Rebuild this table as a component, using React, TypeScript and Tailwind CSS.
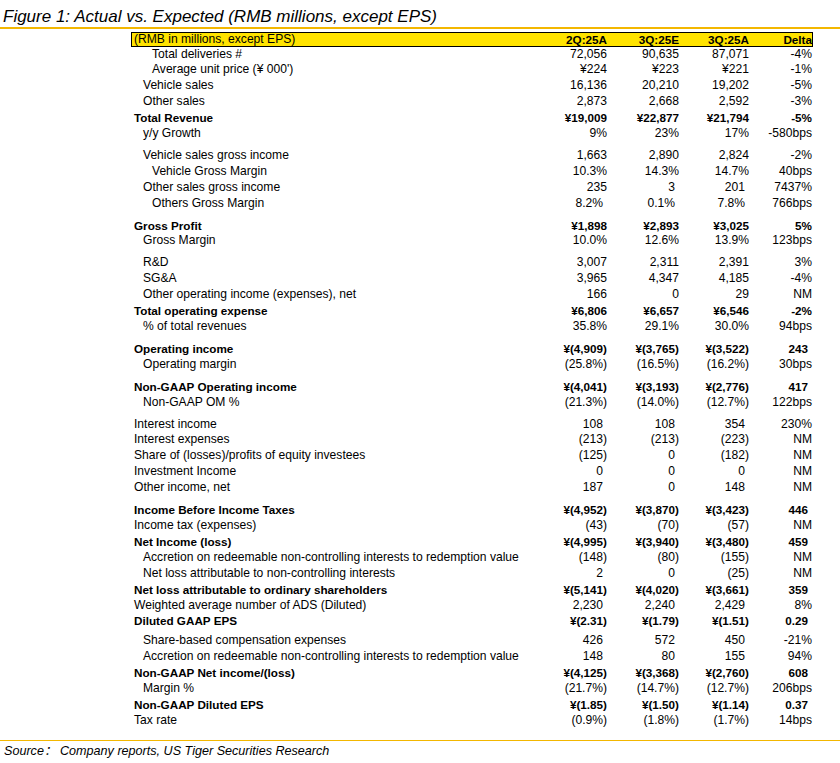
type Row = [string, number, boolean, string, string, string, string];

// "~" at the end of a value = cell is padded in from the right edge
const rows: (Row | "gap" | "gapSm")[] = [
  ["Total deliveries #", 2, false, "72,056", "90,635", "87,071", "-4%"],
  ["Average unit price (¥ 000')", 2, false, "¥224", "¥223", "¥221", "-1%"],
  ["Vehicle sales", 1, false, "16,136", "20,210", "19,202", "-5%"],
  ["Other sales", 1, false, "2,873", "2,668", "2,592", "-3%"],
  ["Total Revenue", 0, true, "¥19,009", "¥22,877", "¥21,794", "-5%"],
  ["y/y Growth", 1, false, "9%", "23%", "17%", "-580bps"],
  "gap",
  ["Vehicle sales gross income", 1, false, "1,663", "2,890", "2,824", "-2%"],
  ["Vehicle Gross Margin", 2, false, "10.3%", "14.3%", "14.7%", "40bps"],
  ["Other sales gross income", 1, false, "235", "3~", "201~", "7437%"],
  ["Others Gross Margin", 2, false, "8.2%~", "0.1%~", "7.8%~", "766bps"],
  "gap",
  ["Gross Profit", 0, true, "¥1,898", "¥2,893", "¥3,025", "5%"],
  ["Gross Margin", 1, false, "10.0%", "12.6%", "13.9%", "123bps"],
  "gap",
  ["R&D", 1, false, "3,007", "2,311", "2,391", "3%"],
  ["SG&A", 1, false, "3,965", "4,347", "4,185", "-4%"],
  ["Other operating income (expenses), net", 1, false, "166", "0", "29", "NM"],
  ["Total operating expense", 0, true, "¥6,806", "¥6,657", "¥6,546", "-2%"],
  ["% of total revenues", 1, false, "35.8%", "29.1%", "30.0%", "94bps"],
  "gap",
  ["Operating income", 0, true, "¥(4,909)", "¥(3,765)", "¥(3,522)", "243~"],
  ["Operating margin", 1, false, "(25.8%)", "(16.5%)", "(16.2%)", "30bps"],
  "gap",
  ["Non-GAAP Operating income", 0, true, "¥(4,041)", "¥(3,193)", "¥(2,776)", "417~"],
  ["Non-GAAP OM %", 1, false, "(21.3%)", "(14.0%)", "(12.7%)", "122bps"],
  "gap",
  ["Interest income", 0, false, "108~", "108~", "354~", "230%"],
  ["Interest expenses", 0, false, "(213)", "(213)", "(223)", "NM"],
  ["Share of (losses)/profits of equity investees", 0, false, "(125)", "0~", "(182)", "NM"],
  ["Investment Income", 0, false, "0~", "0~", "0~", "NM"],
  ["Other income, net", 0, false, "187~", "0~", "148~", "NM"],
  "gap",
  ["Income Before Income Taxes", 0, true, "¥(4,952)", "¥(3,870)", "¥(3,423)", "446~"],
  ["Income tax (expenses)", 0, false, "(43)", "(70)", "(57)", "NM"],
  ["Net Income (loss)", 0, true, "¥(4,995)", "¥(3,940)", "¥(3,480)", "459~"],
  ["Accretion on redeemable non-controlling interests to redemption value", 1, false, "(148)", "(80)", "(155)", "NM"],
  ["Net loss attributable to non-controlling interests", 1, false, "2~", "0~", "(25)", "NM"],
  ["Net loss attributable to ordinary shareholders", 0, true, "¥(5,141)", "¥(4,020)", "¥(3,661)", "359~"],
  ["Weighted average number of ADS (Diluted)", 0, false, "2,230~", "2,240~", "2,429~", "8%"],
  ["Diluted GAAP EPS", 0, true, "¥(2.31)", "¥(1.79)", "¥(1.51)", "0.29~"],
  "gapSm",
  ["Share-based compensation expenses", 1, false, "426~", "572~", "450~", "-21%"],
  ["Accretion on redeemable non-controlling interests to redemption value", 1, false, "148~", "80~", "155~", "94%"],
  ["Non-GAAP Net income/(loss)", 0, true, "¥(4,125)", "¥(3,368)", "¥(2,760)", "608~"],
  ["Margin %", 1, false, "(21.7%)", "(14.7%)", "(12.7%)", "206bps"],
  ["Non-GAAP Diluted EPS", 0, true, "¥(1.85)", "¥(1.50)", "¥(1.14)", "0.37~"],
  ["Tax rate", 0, false, "(0.9%)", "(1.8%)", "(1.7%)", "14bps"],
];

const indents = ["pl-[3px]", "pl-[12px]", "pl-[21px]"];
const colWidths = ["w-[72px]", "w-[72px]", "w-[70px]", "w-[64px]"];

const Cell = ({ value, col }: { value: string; col: number }) => {
  const padded = value.endsWith("~");
  const text = padded ? value.slice(0, -1) : value;
  let pad = col === 3 ? "pr-[1px]" : "pr-0";
  if (padded) pad = col === 3 ? "pr-[5px]" : "pr-[4px]";
  return <div className={`${colWidths[col]} ${pad} shrink-0 text-right`}>{text}</div>;
};

export default function App() {
  return (
    <div className="w-[840px] h-[763px] bg-white text-black font-['Liberation_Sans','Noto_Sans_CJK_SC',sans-serif]">
      <div className="pt-[7px] pl-[3px] text-[17px] leading-[19px] italic">
        Figure 1: Actual vs. Expected (RMB millions, except EPS)
      </div>
      <div className="mt-[1px] h-[1.5px] bg-[#f3b700]" />

      <div className="ml-[131px] mt-[3px] w-[682px] text-[12.1px]">
        <div className="flex h-[15px] items-center border border-black bg-[#ffe300] leading-[13px]">
          <div className="flex-1 pl-[2px]">(RMB in millions, except EPS)</div>
          {["2Q:25A", "3Q:25E", "3Q:25A"].map((h, i) => (
            <div key={h} className={`${colWidths[i]} shrink-0 text-right text-[11.7px] font-bold`}>
              {h}
            </div>
          ))}
          <div className="w-[63px] shrink-0 text-right text-[11.7px] font-bold">Delta</div>
        </div>

        <div>
          {rows.map((r, i) => {
            if (r === "gap") return <div key={i} className="h-[6px]" />;
            if (r === "gapSm") return <div key={i} className="h-[4px]" />;
            const [label, indent, bold, a, b, c, d] = r;
            return (
              <div
                key={i}
                className={`flex h-[15.92px] items-center leading-[15.92px] ${bold ? "text-[11.7px] font-bold" : ""}`}
              >
                <div className={`flex-1 whitespace-nowrap ${indents[indent]}`}>{label}</div>
                {[a, b, c, d].map((v, j) => (
                  <Cell key={j} value={v} col={j} />
                ))}
              </div>
            );
          })}
        </div>
      </div>

      <div className="mt-[11px] h-[1.5px] bg-[#f3b700]" />
      <div className="pl-[4px] pt-[2px] text-[12.6px] leading-[16px] italic">
        Source：&nbsp;Company reports, US Tiger Securities Research
      </div>
    </div>
  );
}
